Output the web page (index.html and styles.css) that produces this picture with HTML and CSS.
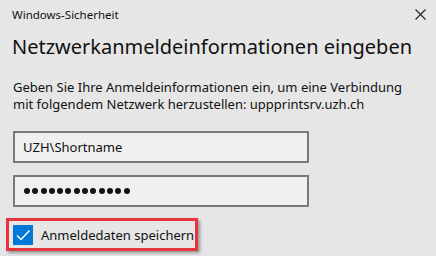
FILE: index.html
```html
<!DOCTYPE html>
<html lang="de">
<head>
<meta charset="UTF-8">
<title>Windows-Sicherheit</title>
<link rel="stylesheet" href="styles.css">
</head>
<body>
  <div class="dialog">
    <div class="titlebar">
      <span class="app-name">Windows-Sicherheit</span>
      <span class="close">
        <svg width="11" height="11" viewBox="0 0 11 11"><path d="M0.5 0.5 L10.5 10.5 M10.5 0.5 L0.5 10.5" stroke="#222" stroke-width="1.1"/></svg>
      </span>
    </div>
    <h1 class="heading">Netzwerkanmeldeinformationen eingeben</h1>
    <p class="message">Geben Sie Ihre Anmeldeinformationen ein, um eine Verbindung<br>mit folgendem Netzwerk herzustellen: uppprintsrv.uzh.ch</p>
    <div class="field">UZH\Shortname</div>
    <div class="field password" title="Kennwort">
      <span class="dot"></span><span class="dot"></span><span class="dot"></span><span class="dot"></span><span class="dot"></span>
      <span class="dot"></span><span class="dot"></span><span class="dot"></span><span class="dot"></span><span class="dot"></span>
      <span class="dot"></span><span class="dot"></span><span class="dot"></span>
    </div>
    <div class="remember">
      <span class="checkbox">
        <svg width="20" height="20" viewBox="0 0 20 20"><path d="M4 10.5 L8 14.5 L16.5 5.5" fill="none" stroke="#fff" stroke-width="1.4"/></svg>
      </span>
      <span class="remember-label">Anmeldedaten speichern</span>
    </div>
  </div>
</body>
</html>
```

FILE: styles.css
```css
body {
  margin: 0;
  background-color: #e6e6e6;
  font-family: 'Noto Sans', 'Open Sans', sans-serif;
  color: #000;
}

.dialog {
  display: flex;
  flex-direction: column;
  width: 436px;
  height: 256px;
  overflow: hidden;
}

.titlebar {
  display: flex;
  justify-content: space-between;
  align-items: center;
  height: 28px;
  padding: 0 10px 0 12px;
}

.app-name {
  font-size: 11.5px;
  color: #111;
}

.close {
  display: flex;
  width: 11px;
  height: 11px;
}

.heading {
  margin: 6px 0 0 12px;
  font-size: 20px;
  font-weight: normal;
  color: #111;
  line-height: 26px;
}

.message {
  margin: 19px 0 0 13px;
  font-size: 13px;
  line-height: 17px;
  white-space: nowrap;
  color: #111;
}

.field {
  box-sizing: border-box;
  display: flex;
  align-items: center;
  width: 296px;
  height: 32px;
  margin: 0 0 12px 13px;
  padding: 0 8px;
  border: 2px solid #7a7a7a;
  background-color: #f0f0f0;
  font-size: 13px;
  color: #111;
}

.message + .field {
  margin-top: 18px;
}

.password {
  gap: 2.3px;
  padding-left: 9px;
}

.dot {
  width: 6px;
  height: 6px;
  border-radius: 50%;
  background-color: #111;
}

.remember {
  display: flex;
  align-items: center;
  align-self: flex-start;
  gap: 8px;
  box-sizing: border-box;
  width: 192px;
  height: 33px;
  margin: -1px 0 0 6px;
  padding: 1px 0 0 4px;
  border: 3px solid #e8343c;
  box-shadow: 2px 2px 3px rgba(0, 0, 0, 0.35);
}

.checkbox {
  display: flex;
  width: 20px;
  height: 20px;
  background-color: #0078d7;
}

.remember-label {
  font-size: 13px;
  color: #111;
}
```
